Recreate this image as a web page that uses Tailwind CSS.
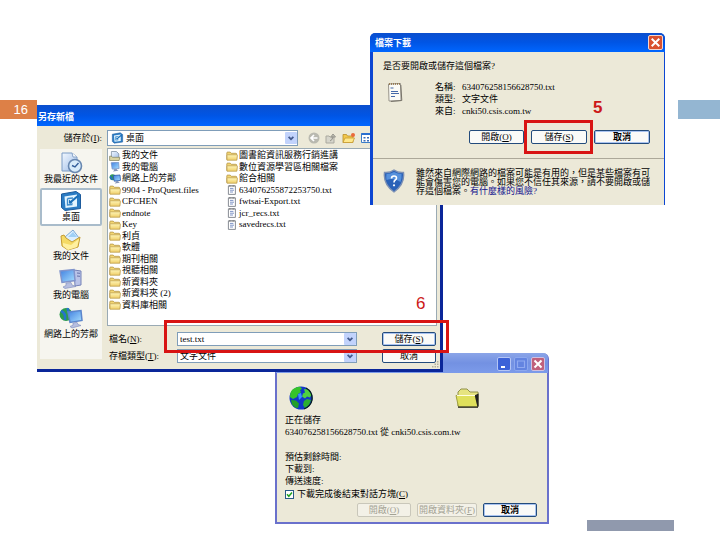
<!DOCTYPE html>
<html lang="zh-Hant">
<head>
<meta charset="utf-8">
<title>另存新檔</title>
<script src="https://cdn.jsdelivr.net/npm/@tailwindcss/browser@4"></script>
</head>
<body class="relative min-h-screen overflow-hidden bg-white font-['Liberation_Serif','Noto_Sans_CJK_TC',serif] text-[9px] leading-[11px] text-black">

<svg class="absolute size-0" aria-hidden="true">
  <defs>
    <linearGradient id="fold" x1="0" y1="0" x2="0" y2="1"><stop offset="0" stop-color="#fff6b8"/><stop offset="1" stop-color="#efce68"/></linearGradient>
    <linearGradient id="scr" x1="0" y1="0" x2="1" y2="1"><stop offset="0" stop-color="#3f7fe0"/><stop offset="1" stop-color="#a8e0ff"/></linearGradient>
    <linearGradient id="paper" x1="0" y1="0" x2="1" y2="1"><stop offset="0" stop-color="#f2f8ff"/><stop offset="1" stop-color="#9dbbe6"/></linearGradient>
    <symbol id="folder" viewBox="0 0 12 10"><path d="M.8 8.6V1.900q0-.8.8-.8h2.600l1.100 1.200h4.600q.8 0 .8.8v5.500z" fill="#f3d672" stroke="#b4954a" stroke-width=".8"/><path d="M1 9.200V4.400q0-.6.6-.6h9.200q.6 0 .6.600l-.6 4.800z" fill="url(#fold)" stroke="#b8984a" stroke-width=".7"/></symbol>
    <symbol id="txt" viewBox="0 0 12 10"><path d="M2.400.8h7v8.600h-7z" fill="#fff" stroke="#7b8088" stroke-width=".9"/><path d="M3 1h6" stroke="#555" stroke-dasharray=".8 .6"/><path d="M4 3.400h3.400M4 5.200h4M4 7h3" stroke="#5d79b8" stroke-width=".8"/></symbol>
    <symbol id="docs" viewBox="0 0 12 10"><path d="M2.400.5h5l2.400 2.300v5H2.400z" fill="url(#paper)" stroke="#6f8296" stroke-width=".7"/><path d="M.6 9.500V5.200h1.800l1 1.100h7.400l-.7 3.200z" fill="#d9d3a0" stroke="#81805b" stroke-width=".7"/></symbol>
    <symbol id="pc" viewBox="0 0 12 10"><path d="M2.200.7 9.600.3l.5 6.200-6.900.6z" fill="url(#scr)" stroke="#7792c8" stroke-width=".8"/><path d="m4.600 7.300 3-.4.500 1.200 1.500.6-5.800.9 1.200-1z" fill="#8494b8"/></symbol>
    <symbol id="net" viewBox="0 0 12 10"><circle cx="3.600" cy="3.300" r="3" fill="#2f9a58"/><path d="M1 2.500Q3 4 3 6" stroke="#2866c8" stroke-width="1.600" fill="none"/><path d="m4.200 1.500 6.800-.5.500 5.400-6.300.8z" fill="url(#scr)" stroke="#2c58a8" stroke-width=".8"/><path d="m6.500 7.300 2.600-.3.500 1.100 1.300.6-5.300.8 1.100-1.100z" fill="#8494b8"/></symbol>
    <symbol id="arrow" viewBox="0 0 12 12"><rect width="12" height="12" rx="1" fill="#c2d3fc"/><path d="M3.600 4.800 6 7.200l2.400-2.400" fill="none" stroke="#42598c" stroke-width="1.700"/></symbol>
    <symbol id="desk" viewBox="0 0 24 22"><path d="M2.500 4 17 1.500l4.500 3v14L6 20.500l-3.500-3z" fill="#2b7cc4" stroke="#1d5b9c"/><path d="M5.500 6.500 18 4.500v12L6.500 18z" fill="#e4f5ff"/><path d="M8.500 8.500 14 8M8.500 8.500V15l5-.5" fill="none" stroke="#3f8ccc" stroke-width="1.400"/><path d="m10.500 13 9-7.500" stroke="#1a6fb8" stroke-width="2.200"/><path d="M10 13.500v-4l4 4z" fill="#1a6fb8"/></symbol>
  </defs>
</svg>

<div class="absolute left-0 top-[100px] flex h-[19px] w-[37px] items-center justify-end bg-[#dd8047] pr-[9px] pb-px font-['Liberation_Sans',sans-serif] text-[13px] text-white">16</div>
<div class="absolute right-0 top-[100px] h-[19px] w-[42px] bg-[#94b6d2]"></div>
<div class="absolute left-[587px] top-[520px] h-[11px] w-[87px] bg-[#9099ad]"></div>

<!-- Progress window -->
<section aria-label="正在儲存" class="absolute left-[275px] top-[353px] flex w-[274px] flex-col rounded-t-md border-x-2 border-b-2 border-[#6a71cc] bg-[#ece9d8] pb-[5px]">
  <header class="-mx-px flex h-5 items-center justify-end gap-[3px] rounded-t-[5px] bg-linear-to-b from-[#8ba5e8] via-[#7391e2] to-[#7c9bea] pr-[3px] pt-px">
    <button aria-label="最小化" class="h-[14px] w-[14px] rounded-xs border border-[#b4c5f5] bg-[#3c62d8]"><svg viewBox="0 0 12 12" class="size-full"><path d="M3 9h4" stroke="#fff" stroke-width="2"/></svg></button>
    <button aria-label="最大化" disabled class="h-[14px] w-[14px] rounded-xs border border-[#8da8ee] bg-[#6384e0]"><svg viewBox="0 0 12 12" class="size-full"><path d="M2.500 3h7v6.500h-7z" fill="none" stroke="#90aaf0" stroke-width="1.200"/></svg></button>
    <button aria-label="關閉" class="h-[14px] w-[14px] rounded-xs border border-[#d0c0e0] bg-[#c0607c]"><svg viewBox="0 0 12 12" class="size-full"><path d="m2.500 2.500 7 7m0-7-7 7" stroke="#fff" stroke-width="2"/></svg></button>
  </header>
  <div class="flex items-center justify-between pl-3 pr-[68px] pt-[13px]">
    <svg viewBox="0 0 24 24" class="size-6"><circle cx="12" cy="12" r="11.500" fill="#1238c8"/><path d="M3 4Q6 1 11 .8l2 2-2 1.500 1 2-3 1.700L8 11l-4 2-3-2Q.5 7 3 4z" fill="#35c42a"/><path d="m15 3 4 .5 3.500 5-1.500 3-3-1-2 2-3-2 1-3 2-1z" fill="#4fd040"/><path d="m2 14 5 .5 3 3-1 4.500-3-.5-3-3z" fill="#239f2a"/><path d="m15 15 3-2 4 1-2 5-4 3-2-3z" fill="#2bb030"/><path d="m9 8 3-1 1 4-3 3z" fill="#3a92ff"/><path d="M17 2q7 4 6 12-1 6-8 9" fill="none" stroke="#052014" stroke-width="1.300"/></svg>
    <svg viewBox="0 0 24 20" class="h-5 w-6"><path d="M3 18V4l3-3h6l3 3h8v14z" fill="#e6e480" stroke="#90904a"/><path d="M1 7.500h19L23 19H3.500z" fill="#dfe05c" stroke="#a1a140"/><path d="M3 19.200h20M20.500 7.500 23 18.500V6.500z" fill="#222" stroke="#222" stroke-width="1.200"/><path d="M2 7.500h18" stroke="#fffee0"/></svg>
  </div>
  <div class="flex flex-col gap-[1px] pl-2 pt-[5px]">
    <p>正在儲存</p>
    <p>634076258156628750.txt 從 cnki50.csis.com.tw</p>
    <p class="pt-[13px]">預估剩餘時間:</p>
    <p>下載到:</p>
    <p>傳送速度:</p>
    <label class="flex items-center gap-[3px] pt-px"><span class="relative flex size-[9px]"><input type="checkbox" checked class="size-[9px] appearance-none border border-[#2a5a86] bg-white"><svg viewBox="0 0 9 9" class="pointer-events-none absolute inset-0 size-full"><path d="m2 4.300 1.800 2L7 2.500" fill="none" stroke="#21a121" stroke-width="1.500"/></svg></span><span>下載完成後結束對話方塊(<u>C</u>)</span></label>
  </div>
  <div class="flex justify-end gap-[6px] pr-[10px] pt-[3px]">
    <button disabled class="h-[14px] w-[54px] rounded-xs border border-[#c9c7ba] bg-[#f3f1e7] text-[#a3a294]">開啟(<u>O</u>)</button>
    <button disabled class="h-[14px] w-[60px] rounded-xs border border-[#c9c7ba] bg-[#f3f1e7] whitespace-nowrap text-[#a3a294]">開啟資料夾(<u>F</u>)</button>
    <button class="h-[14px] w-[54px] rounded-xs border border-[#234b7c] bg-[#fafaf8] font-bold inset-ring inset-ring-[#a9c3f0]">取消</button>
  </div>
</section>

<!-- Save-as dialog -->
<section aria-label="另存新檔" class="absolute left-[37px] top-[105px] w-[406px] border-r-[3px] border-b-[3px] border-[#0a2699] bg-[#ece9d8]">
  <header class="-mr-[3px] flex h-[21px] items-center bg-linear-to-b from-[#0b4fce] via-[#0055e5] to-[#0066ff] pl-px pt-[3px]"><h2 class="font-bold text-white">另存新檔</h2></header>
  <div class="grid grid-cols-[62px_1fr] gap-x-[5px] gap-y-[2px] pb-[6px] pl-[3px] pr-[3px] pt-1">
    <label for="folder-select" class="flex items-center justify-end">儲存於(<u>I</u>):</label>
    <div class="flex items-center gap-[5px]">
      <div class="relative mr-[5px] h-4 w-[191px]">
        <select id="folder-select" class="h-4 w-full appearance-none border border-[#7f9db9] bg-white pl-[18px] leading-[13px]"><option>桌面</option></select>
        <svg class="pointer-events-none absolute left-1 top-[2px] h-3 w-[13px]"><use href="#desk"/></svg>
        <svg class="pointer-events-none absolute right-px top-px h-[14px] w-3"><use href="#arrow"/></svg>
      </div>
      <button aria-label="上一頁"><svg viewBox="0 0 12 12" class="size-3"><circle cx="6" cy="6" r="5.500" fill="#b9b9b0"/><path d="M9.500 6H3m3-3L3 6l3 3" fill="none" stroke="#fff" stroke-width="1.700"/></svg></button>
      <button aria-label="上一層"><svg viewBox="0 0 12 12" class="size-3"><path d="M1 11V4h3l1 1h4v6z" fill="#d6d5cb" stroke="#aaa99f"/><path d="M5 9q3-1 3-5M5.800 5 8 2l2.500 3z" fill="#c5c4ba" stroke="#97968d"/></svg></button>
      <button aria-label="新資料夾"><svg viewBox="0 0 14 12" class="h-3 w-[14px]"><path d="M1 10.500V2.500h3.500l1 1.500H11v6.500z" fill="#f2c84c" stroke="#b98e2a" stroke-width=".8"/><path d="M1 10.500 3 6h9.500l-2 4.500z" fill="#ffe88b" stroke="#c79a33" stroke-width=".8"/><circle cx="11" cy="3" r="2" fill="#ea6a3c"/></svg></button>
      <button aria-label="檢視"><svg viewBox="0 0 14 12" class="h-3 w-[14px]"><path d="M.5 1.500h13v9H.5z" fill="#fff" stroke="#3a7cc8"/><path d="M.5 2h13" stroke="#2a6fd0" stroke-width="2"/><path d="M2.500 5h2v1.500h-2zM6 5h2v1.500H6zm3.500 0h2v1.500h-2zM2.500 8h2v1.500h-2zM6 8h2v1.500H6zm3.500 0h2v1.500h-2z" fill="#3b6db8"/></svg></button>
    </div>

    <nav aria-label="位置" class="mb-1 mt-px flex flex-col bg-[#f6f5ef] text-center whitespace-nowrap">
      <a href="#" class="flex h-[39px] flex-col items-center pt-[3px]">
        <svg viewBox="0 0 24 22" class="h-[22px] w-6"><path d="M3 1h10l5 4v14H3z" fill="url(#paper)" stroke="#7d9cc6"/><path d="m13 1 1 4h4" fill="#fff" stroke="#88a4c8"/><circle cx="16" cy="14" r="6.500" fill="#d8ecfa" stroke="#6887b0" stroke-width="1.600"/><path d="m13 13.500 3 1.500 3.500-4" fill="none" stroke="#345f9b" stroke-width="1.400"/></svg>我最近的文件</a>
      <a href="#" class="flex h-[38px] flex-col items-center rounded-xs border-2 border-[#a9bccb] bg-white">
        <svg class="h-[22px] w-6 shrink-0"><use href="#desk"/></svg>桌面</a>
      <a href="#" class="flex h-[39px] flex-col items-center pt-[3px]">
        <svg viewBox="0 0 24 22" class="h-[22px] w-6"><path d="m6 8 8-7 6 8-6 7H6z" fill="#dcefff" stroke="#79a7d6"/><path d="m9 8 5-5 4 5" fill="#9fd0f6"/><path d="M2 7 5 6l2 3 6 4 8-5-2 10-10 3-6-4z" fill="#f5da65" stroke="#c49c36"/><path d="m4 14 8 2 8-6-2 8-9 3-5-4z" fill="#fff0a0"/></svg>我的文件</a>
      <a href="#" class="flex h-[39px] flex-col items-center pt-[3px]">
        <svg viewBox="0 0 24 22" class="h-[22px] w-6"><path d="m15 2 7 1v14l-6 1z" fill="#b9c3e8" stroke="#7683b8"/><path d="m18 5 3 .3M18 8l3 .3" stroke="#6471a8"/><path d="m1 3 14-1.500 1 11L3 14.500z" fill="url(#scr)" stroke="#8094cc" stroke-width="1.500"/><path d="m7 15 5-.5 1 2.500 4 1.500-11 2-2-1.500 3-1.500z" fill="#b6bee0" stroke="#8794c0" stroke-width=".7"/></svg>我的電腦</a>
      <a href="#" class="flex flex-col items-center pt-[3px]">
        <svg viewBox="0 0 24 22" class="h-[22px] w-6"><circle cx="7" cy="7.500" r="6.500" fill="#2d9c4c"/><path d="M2 4q5 2 4 9M9 1Q8 5 12 6" fill="none" stroke="#2674cc" stroke-width="2.500"/><path d="m9 5 13-1.500 1 10-12 2z" fill="url(#scr)" stroke="#5c86cc" stroke-width="1.500"/><path d="m14 16 4-.7 1 2.200 3 1-9 2.500-2-1.500 3-1.300z" fill="#b6bee0" stroke="#8794c0" stroke-width=".7"/></svg>網路上的芳鄰</a>
    </nav>

    <div class="flex flex-col">
      <ul class="grid h-[178px] auto-cols-[117px] grid-flow-col grid-rows-[repeat(14,minmax(0,1fr))] content-start border border-[#9aaab4] bg-white pb-[14px] pl-px pt-px *:flex *:items-center *:gap-px *:whitespace-nowrap">
        <li><svg class="h-[10px] w-3"><use href="#docs"/></svg>我的文件</li>
        <li><svg class="h-[10px] w-3"><use href="#pc"/></svg>我的電腦</li>
        <li><svg class="h-[10px] w-3"><use href="#net"/></svg>網路上的芳鄰</li>
        <li><svg class="h-[10px] w-3"><use href="#folder"/></svg>9904 - ProQuest.files</li>
        <li><svg class="h-[10px] w-3"><use href="#folder"/></svg>CFCHEN</li>
        <li><svg class="h-[10px] w-3"><use href="#folder"/></svg>endnote</li>
        <li><svg class="h-[10px] w-3"><use href="#folder"/></svg>Key</li>
        <li><svg class="h-[10px] w-3"><use href="#folder"/></svg>利貞</li>
        <li><svg class="h-[10px] w-3"><use href="#folder"/></svg>軟體</li>
        <li><svg class="h-[10px] w-3"><use href="#folder"/></svg>期刊相關</li>
        <li><svg class="h-[10px] w-3"><use href="#folder"/></svg>視聽相關</li>
        <li><svg class="h-[10px] w-3"><use href="#folder"/></svg>新資料夾</li>
        <li><svg class="h-[10px] w-3"><use href="#folder"/></svg>新資料夾 (2)</li>
        <li><svg class="h-[10px] w-3"><use href="#folder"/></svg>資料庫相關</li>
        <li><svg class="h-[10px] w-3"><use href="#folder"/></svg>圖書館資訊服務行銷進講</li>
        <li><svg class="h-[10px] w-3"><use href="#folder"/></svg>數位資源學習區相關檔案</li>
        <li><svg class="h-[10px] w-3"><use href="#folder"/></svg>館合相關</li>
        <li><svg class="h-[10px] w-3"><use href="#txt"/></svg>634076255872253750.txt</li>
        <li><svg class="h-[10px] w-3"><use href="#txt"/></svg>fwtsai-Export.txt</li>
        <li><svg class="h-[10px] w-3"><use href="#txt"/></svg>jcr_recs.txt</li>
        <li><svg class="h-[10px] w-3"><use href="#txt"/></svg>savedrecs.txt</li>
      </ul>
      <div class="grid grid-cols-[68px_180px_54px] items-center gap-y-[3px] pl-[2px] pt-[6px]">
        <label for="filename">檔名(<u>N</u>):</label>
        <div class="relative h-[14px]">
          <input id="filename" value="test.txt" class="block h-[14px] w-full border border-[#7f9db9] bg-white pl-[2px]">
          <svg class="pointer-events-none absolute right-px top-px size-3"><use href="#arrow"/></svg>
        </div>
        <button class="ml-[25px] h-[14px] w-[54px] rounded-xs border border-[#234b7c] bg-[#fafaf8] inset-ring inset-ring-[#a9c3f0]">儲存(<u>S</u>)</button>
        <label for="filetype">存檔類型(<u>T</u>):</label>
        <div class="relative h-[14px]">
          <select id="filetype" class="block h-[14px] w-full appearance-none border border-[#7f9db9] bg-white pl-[2px] leading-[11px]"><option>文字文件</option></select>
          <svg class="pointer-events-none absolute right-px top-px size-3"><use href="#arrow"/></svg>
        </div>
        <button class="ml-[25px] h-[14px] w-[54px] rounded-xs border border-[#234b7c] bg-[#fafaf8]">取消</button>
      </div>
    </div>
  </div>
  <svg viewBox="0 0 8 8" class="absolute bottom-px right-px size-2"><path d="M6 1h1.500v1.500H6zM6 3.500h1.500V5H6zM6 6h1.500v1.500H6zM3.500 3.500H5V5H3.500zM3.500 6H5v1.500H3.500zM1 6h1.500v1.500H1z" fill="#b4b09c"/></svg>
</section>

<!-- Download dialog -->
<section aria-label="檔案下載" class="absolute left-[370px] top-[33px] w-[295px] rounded-t-md border-l-[3px] border-r border-[#0c46d2] bg-[#ece9d8] pb-[9px]">
  <header class="-ml-[3px] -mr-px flex h-[19px] items-center justify-between rounded-t-[5px] bg-linear-to-b from-[#0b4fce] via-[#0055e5] to-[#0066ff] pl-[5px] pr-[2px]">
    <h2 class="pt-px font-bold text-white">檔案下載</h2>
    <button aria-label="關閉" class="size-[15px] rounded-xs border border-[#f5d5cc] bg-[#d9512f]"><svg viewBox="0 0 12 12" class="size-full"><path d="m2.500 2.500 7 7m0-7-7 7" stroke="#fff" stroke-width="1.800"/></svg></button>
  </header>
  <p class="pl-[10px] pt-[9px]">是否要開啟或儲存這個檔案?</p>
  <div class="flex pl-[14px] pt-[10px]">
    <svg viewBox="0 0 16 20" class="h-5 w-4"><path d="m1.500 2 12-.5.5 17-12 .5z" fill="#fbfbf6" stroke="#98948a"/><path d="m13.800 3 1 15.500-11 1" fill="none" stroke="#77736a"/><path d="M2 2h11" stroke="#8b6a3a" stroke-width="1.500" stroke-dasharray="1 1"/><path d="M3.500 6h3M4 9.500h7M4 11.500h8M4 14.500h4" stroke="#4469a8"/></svg>
    <dl class="ml-8 grid grid-cols-[27px_1fr] gap-y-px">
      <dt>名稱:</dt><dd>634076258156628750.txt</dd>
      <dt>類型:</dt><dd>文字文件</dd>
      <dt>來自:</dt><dd>cnki50.csis.com.tw</dd>
    </dl>
  </div>
  <div class="flex justify-end gap-[7px] pr-[14px] pt-[13px]">
    <button class="h-[14px] w-[55px] rounded-xs border border-[#234b7c] bg-[#fafaf8]">開啟(<u>O</u>)</button>
    <button class="h-[14px] w-[56px] rounded-xs border border-[#234b7c] bg-[#fafaf8]">儲存(<u>S</u>)</button>
    <button class="h-[14px] w-[56px] rounded-xs border border-[#234b7c] bg-[#fafaf8] font-bold inset-ring inset-ring-[#a9c3f0]">取消</button>
  </div>
  <div class="mt-[14px] flex border-t border-[#aca899] pl-[10px] pt-[9px]">
    <svg viewBox="0 0 22 24" class="mt-px h-6 w-[22px] shrink-0"><path d="M11 1q4 3 9.500 2.500Q22 15 11 23 0 15 1.500 3.500 7 4 11 1z" fill="#2a62b8" stroke="#7c90b4" stroke-width="1.400"/><path d="M11 3q4 2 7.500 2 .5 4-1 8Q11 8 3.500 11 3 8 3.500 5 8 5 11 3z" fill="#5590dc"/><path d="M8.500 9.500q0-2.500 2.500-2.500t2.500 2q0 1.200-1.300 2-1.200.8-1.200 2.500" fill="none" stroke="#fff" stroke-width="1.600"/><circle cx="11" cy="16.300" r="1.100" fill="#fff"/></svg>
    <p class="ml-[11px] whitespace-nowrap pt-px leading-[9px]">雖然來自網際網路的檔案可能是有用的，但是某些檔案有可<br>能會傷害您的電腦。如果您不信任其來源，請不要開啟或儲<br>存這個檔案。<a href="#" class="text-[#10108c]">有什麼樣的風險?</a></p>
  </div>
</section>

<!-- Step callouts -->
<div class="pointer-events-none absolute left-[524px] top-[120px] h-[34px] w-[69px] border-3 border-[#d81414]"></div>
<div class="absolute left-[593px] top-[98px] font-['Liberation_Sans',sans-serif] text-[17px] leading-5 font-bold text-[#cc1818]">5</div>
<div class="pointer-events-none absolute left-[164px] top-[320px] h-[33px] w-[285px] border-3 border-[#d81414]"></div>
<div class="absolute left-[416px] top-[294px] font-['Liberation_Sans',sans-serif] text-[17px] leading-5 text-[#cc1818]">6</div>
</body>
</html>
